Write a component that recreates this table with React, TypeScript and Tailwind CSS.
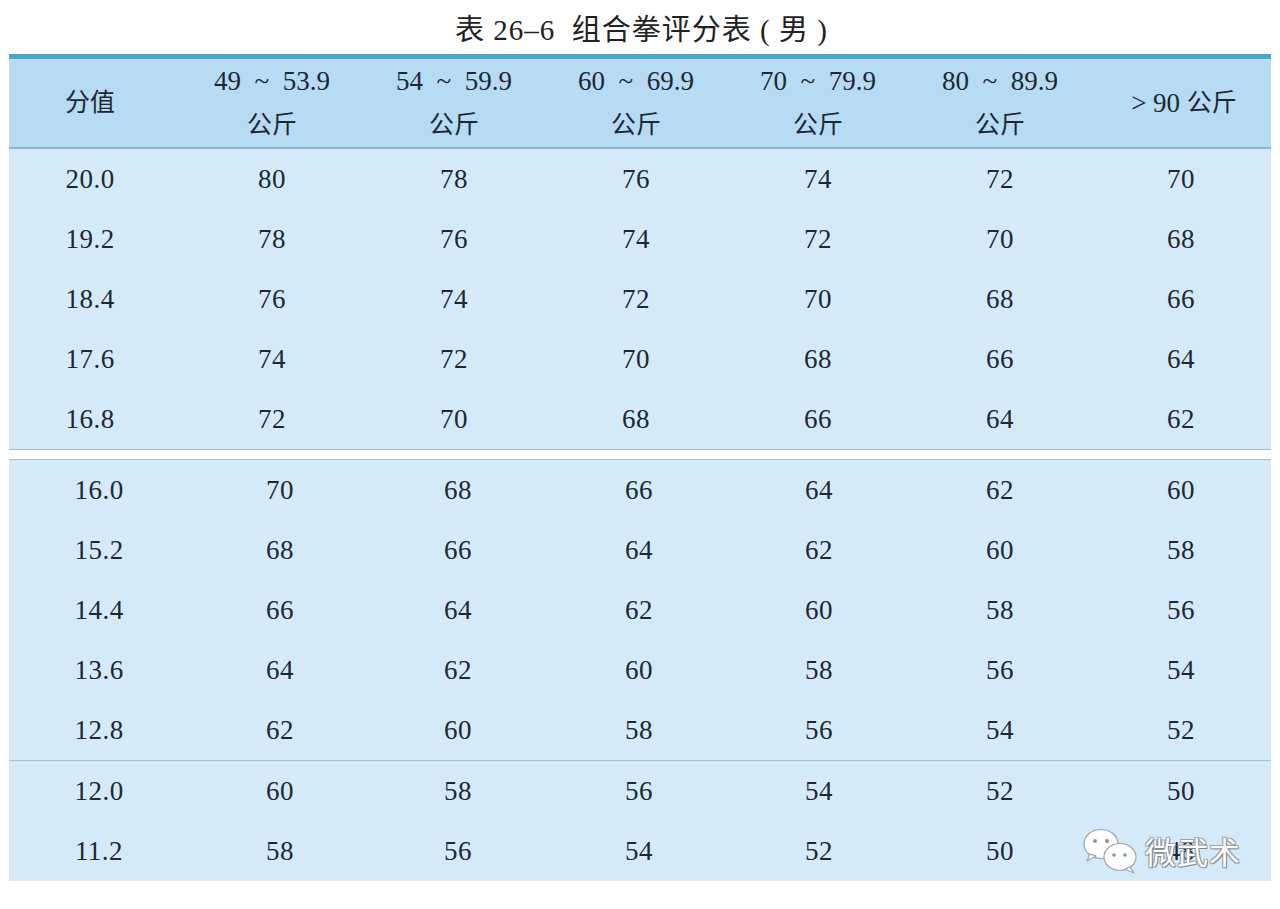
import React from "react";

const FONT = { fontFamily: '"Liberation Serif", "Noto Sans CJK SC", serif' };

const headers: [string, string][] = [
  ["49\u2002~\u200253.9", "公斤"],
  ["54\u2002~\u200259.9", "公斤"],
  ["60\u2002~\u200269.9", "公斤"],
  ["70\u2002~\u200279.9", "公斤"],
  ["80\u2002~\u200289.9", "公斤"],
];

const group1 = [
  ["20.0", "80", "78", "76", "74", "72", "70"],
  ["19.2", "78", "76", "74", "72", "70", "68"],
  ["18.4", "76", "74", "72", "70", "68", "66"],
  ["17.6", "74", "72", "70", "68", "66", "64"],
  ["16.8", "72", "70", "68", "66", "64", "62"],
];
const group2 = [
  ["16.0", "70", "68", "66", "64", "62", "60"],
  ["15.2", "68", "66", "64", "62", "60", "58"],
  ["14.4", "66", "64", "62", "60", "58", "56"],
  ["13.6", "64", "62", "60", "58", "56", "54"],
  ["12.8", "62", "60", "58", "56", "54", "52"],
];
const group3 = [
  ["12.0", "60", "58", "56", "54", "52", "50"],
  ["11.2", "58", "56", "54", "52", "50", "48"],
];

const GRID = "grid grid-cols-[172px_182px_182px_182px_182px_182px_180px]";
const shifted = ["pl-[8px]", "pl-[16px]", "pl-[8px]", "pl-[6px]", "pl-[2px]", "pl-0", "pl-0"];
const plain = ["pr-[10px]", "pl-0", "pl-0", "pl-0", "pl-0", "pl-0", "pl-0"];

function Rows({ rows, shift }: { rows: string[][]; shift: boolean }) {
  const pads = shift ? shifted : plain;
  return (
    <div>
      {rows.map((r, i) => (
        <div key={i} className={`${GRID} h-[60px]`}>
          {r.map((c, j) => (
            <div
              key={j}
              className={`flex items-center justify-center text-[27px] tracking-[0.5px] text-[#202733] ${pads[j]}`}
            >
              {c}
            </div>
          ))}
        </div>
      ))}
    </div>
  );
}

function WeChatLogo() {
  return (
    <svg width="56" height="48" viewBox="0 0 56 48">
      <ellipse cx="18" cy="17" rx="17" ry="14.5" fill="#ffffff" stroke="#9aa4ad" strokeWidth="1.2" />
      <path d="M7 27 L4 34 L13 29 Z" fill="#ffffff" stroke="#9aa4ad" strokeWidth="1.2" strokeLinejoin="round" />
      <circle cx="12" cy="14" r="2" fill="#8c959e" />
      <circle cx="24" cy="14" r="2" fill="#8c959e" />
      <ellipse cx="37" cy="30" rx="16" ry="13.5" fill="#ffffff" stroke="#9aa4ad" strokeWidth="1.2" />
      <path d="M47 40 L51 46 L42 42 Z" fill="#ffffff" stroke="#9aa4ad" strokeWidth="1.2" strokeLinejoin="round" />
      <circle cx="31" cy="28" r="1.8" fill="#8c959e" />
      <circle cx="42" cy="28" r="1.8" fill="#8c959e" />
    </svg>
  );
}

export default function App() {
  return (
    <div className="w-[1280px] h-[909px] bg-white overflow-hidden" style={FONT}>
      <div className="h-[54px] flex items-center justify-center pl-[3px] pt-[8px] text-[29px] text-[#222222] tracking-[1px]">
        表 26–6&nbsp;&nbsp;组合拳评分表 ( 男 )
      </div>
      <div className="ml-[9px] w-[1262px] relative">
        <div className="border-t-[5px] border-[#4aa7cc] bg-[#b6dbf3] border-b-2 border-b-[#8db8cf]">
          <div className={`${GRID} h-[88px]`}>
            <div className="flex items-center justify-center text-[25px] text-[#202733] pr-[10px]">分值</div>
            {headers.map(([a, b], i) => (
              <div key={i} className="flex flex-col items-center justify-center text-[25px] text-[#202733]">
                <div className="leading-[44px] text-[27px]">{a}</div>
                <div className="leading-[44px]">{b}</div>
              </div>
            ))}
            <div className="flex items-center justify-center text-[25px] text-[#202733] pl-[6px]">
              <span className="text-[27px]">&gt;&nbsp;90&nbsp;</span>公斤
            </div>
          </div>
        </div>
        <div className="bg-[#d5eaf8] border-b border-[#9fc3d6]">
          <Rows rows={group1} shift={false} />
        </div>
        <div className="h-[9px] bg-white" />
        <div className="bg-[#d5eaf8] border-t border-b border-[#9fc3d6]">
          <Rows rows={group2} shift={true} />
        </div>
        <div className="bg-[#d5eaf8]">
          <Rows rows={group3} shift={true} />
        </div>
        <div className="absolute left-[1074px] top-[773px] flex items-center gap-[6px]">
          <WeChatLogo />
          <span
            className="text-[31px] text-white tracking-[1px]"
            style={{
              fontFamily: '"Noto Sans CJK SC", sans-serif',
              textShadow:
                "1px 1px 0 #7d868f, -1px 1px 0 #9aa3ab, 1px -1px 0 #9aa3ab, -1px -1px 0 #9aa3ab",
            }}
          >
            微武术
          </span>
        </div>
      </div>
    </div>
  );
}
